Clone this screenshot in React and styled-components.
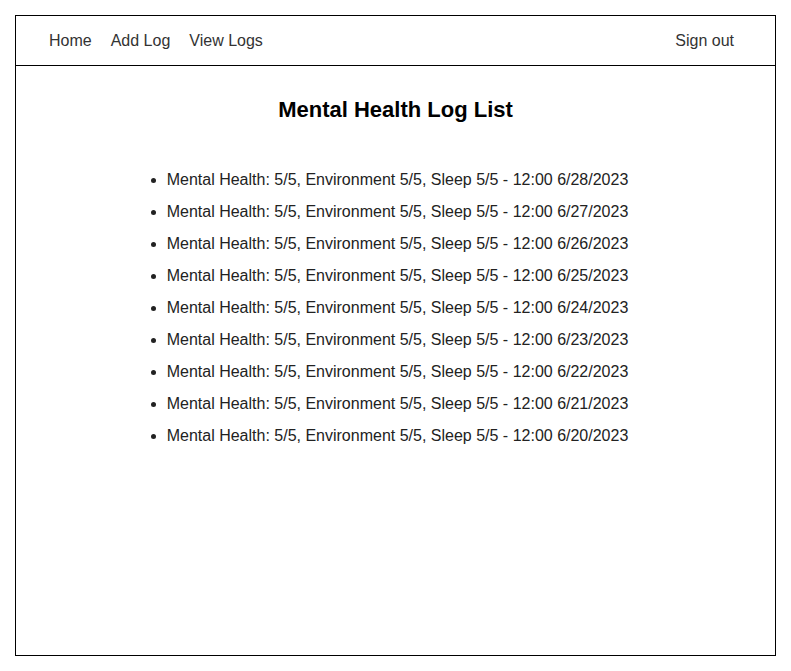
import styled, { createGlobalStyle } from "styled-components";

const GlobalStyle = createGlobalStyle`
  body {
    margin: 0;
    font-family: "Liberation Sans", Arial, sans-serif;
    background: #fff;
  }
`;

const Frame = styled.div`
  margin: 15px 15px 14px 15px;
  height: 639px;
  border: 1px solid #000;
  display: flex;
  flex-direction: column;
`;

const NavBar = styled.nav`
  height: 49px;
  border-bottom: 1px solid #000;
  display: flex;
  align-items: center;
  justify-content: space-between;
  padding: 0 41px 0 33px;
`;

const NavGroup = styled.div`
  display: flex;
  gap: 19px;
`;

const NavLink = styled.a`
  font-size: 16px;
  color: #333;
  text-decoration: none;
  cursor: pointer;
`;

const Main = styled.main`
  display: flex;
  flex-direction: column;
  align-items: center;
`;

const Title = styled.h2`
  font-size: 22px;
  font-weight: bold;
  color: #000;
  margin: 31px 0 41px;
`;

const LogList = styled.ul`
  margin: 0 16px 0 0;
  padding: 0 0 0 20px;
`;

const LogItem = styled.li`
  font-size: 16px;
  line-height: 32px;
  color: #222;
`;

const dates = ["6/28/2023", "6/27/2023", "6/26/2023", "6/25/2023", "6/24/2023", "6/23/2023", "6/22/2023", "6/21/2023", "6/20/2023"];

export default function App() {
  return (
    <>
      <GlobalStyle />
      <Frame>
        <NavBar>
          <NavGroup>
            <NavLink>Home</NavLink>
            <NavLink>Add Log</NavLink>
            <NavLink>View Logs</NavLink>
          </NavGroup>
          <NavLink>Sign out</NavLink>
        </NavBar>
        <Main>
          <Title>Mental Health Log List</Title>
          <LogList>
            {dates.map((d) => (
              <LogItem key={d}>
                Mental Health: 5/5, Environment 5/5, Sleep 5/5 - 12:00 {d}
              </LogItem>
            ))}
          </LogList>
        </Main>
      </Frame>
    </>
  );
}
